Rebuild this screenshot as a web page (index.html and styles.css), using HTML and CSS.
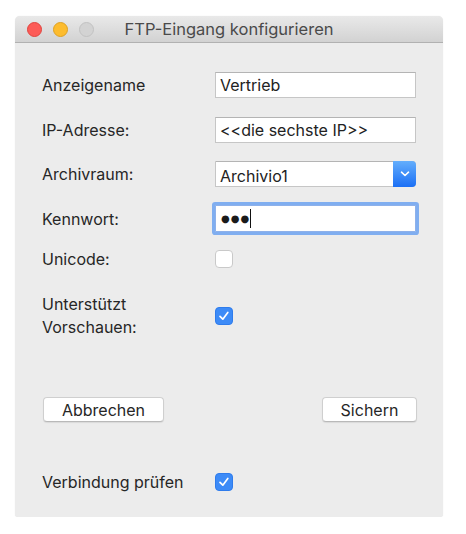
FILE: index.html
```html
<!DOCTYPE html>
<html lang="de">
<head>
<meta charset="utf-8">
<title>FTP-Eingang konfigurieren</title>
<link rel="stylesheet" href="styles.css">
</head>
<body>
<div class="window">
  <div class="titlebar">
    <div class="lights">
      <span class="light red"></span>
      <span class="light yellow"></span>
      <span class="light gray"></span>
    </div>
    <div class="title">FTP-Eingang konfigurieren</div>
  </div>
  <div class="content">
    <div class="row r1">
      <label class="label">Anzeigename</label>
      <div class="field">Vertrieb</div>
    </div>
    <div class="row r2">
      <label class="label">IP-Adresse:</label>
      <div class="field">&lt;&lt;die sechste IP&gt;&gt;</div>
    </div>
    <div class="row r3">
      <label class="label">Archivraum:</label>
      <div class="field select">
        <span class="select-text">Archivio1</span>
        <span class="select-btn">
          <svg width="10" height="6" viewBox="0 0 10 6"><path d="M1.5 1.2 L5 4.5 L8.5 1.2" fill="none" stroke="#fff" stroke-width="1.6" stroke-linecap="round" stroke-linejoin="round"/></svg>
        </span>
      </div>
    </div>
    <div class="row r4">
      <label class="label">Kennwort:</label>
      <div class="field focused"><span class="dots">●●●</span><span class="caret"></span></div>
    </div>
    <div class="row r5">
      <label class="label">Unicode:</label>
      <span class="check"></span>
    </div>
    <div class="row r6">
      <label class="label two">Unterstützt<br>Vorschauen:</label>
      <span class="check on">
        <svg width="18" height="18" viewBox="0 0 18 18"><path d="M5 9.3 L7.8 12.2 L12.8 5.5" fill="none" stroke="#fff" stroke-width="1.7" stroke-linecap="round" stroke-linejoin="round"/></svg>
      </span>
    </div>
    <div class="buttons">
      <button class="btn cancel">Abbrechen</button>
      <button class="btn save">Sichern</button>
    </div>
    <div class="row r7">
      <label class="label">Verbindung prüfen</label>
      <span class="check on">
        <svg width="18" height="18" viewBox="0 0 18 18"><path d="M5 9.3 L7.8 12.2 L12.8 5.5" fill="none" stroke="#fff" stroke-width="1.7" stroke-linecap="round" stroke-linejoin="round"/></svg>
      </span>
    </div>
  </div>
</div>
</body>
</html>
```
FILE: styles.css
```css
html, body {
  margin: 0;
  padding: 0;
  background: #ffffff;
}
body {
  font-family: Inter, "Liberation Sans", sans-serif;
  color: #262626;
}
.window {
  margin: 16px 0 0 15px;
  width: 428px;
  height: 501px;
  background: #ececec;
  border-radius: 5px 5px 3px 3px;
  box-shadow: 0 0 1px rgba(0,0,0,0.12);
  overflow: hidden;
}
.titlebar {
  height: 26px;
  border-bottom: 1px solid #b1b1b1;
  background: linear-gradient(#e9e9e9, #d2d2d2);
  display: flex;
  align-items: center;
  position: relative;
}
.lights {
  display: flex;
  gap: 11px;
  padding-left: 12px;
}
.light {
  width: 15px;
  height: 15px;
  border-radius: 50%;
  box-sizing: border-box;
}
.red { background: #fc5b57; border: 1px solid #e0443e; }
.yellow { background: #fdbc2e; border: 1px solid #dea123; }
.gray { background: #d3d3d3; border: 1px solid #c2c2c2; }
.title {
  position: absolute;
  left: 0;
  right: 0;
  top: 0;
  height: 26px;
  line-height: 27px;
  text-align: center;
  font-size: 16.5px;
  color: #4a4a4a;
  pointer-events: none;
}
.content {
  padding: 0 0 0 27px;
  display: flex;
  flex-direction: column;
}
.row {
  display: flex;
  align-items: center;
}
.label {
  width: 173px;
  flex: none;
  font-size: 16px;
  color: #262626;
}
.label.two {
  line-height: 23px;
}
.r1 { margin-top: 29px; height: 26px; }
.r2 { margin-top: 19px; height: 26px; }
.r3 { margin-top: 18px; height: 26px; }
.r4 { margin-top: 18px; height: 27px; }
.r5 { margin-top: 18px; height: 18px; }
.r6 { margin-top: 25px; height: 46px; }
.r7 { margin-top: 51px; height: 18px; }
.field {
  box-sizing: border-box;
  width: 201px;
  height: 100%;
  background: #fff;
  border: 1px solid #c6c6c6;
  border-top-color: #b4b4b4;
  padding: 0 4px;
  font-size: 16px;
  color: #222;
  display: flex;
  align-items: center;
}
.select {
  padding: 0 0 0 4px;
  border-radius: 0 4px 4px 0;
  position: relative;
}
.select-text { flex: 1; padding-top: 3px; }
.select-btn {
  width: 23px;
  height: calc(100% + 2px);
  margin: -1px -1px -1px 0;
  border-radius: 0 4px 4px 0;
  background: linear-gradient(#64aefc, #1b6ff5);
  display: flex;
  align-items: center;
  justify-content: center;
}
.focused {
  border: 1px solid #8eb1ea;
  box-shadow: 0 0 0 3px #80aef0;
  border-radius: 1px;
  padding-left: 5px;
}
.dots {
  font-family: "DejaVu Sans", sans-serif;
  font-size: 10px;
  letter-spacing: 1px;
  color: #1a1a1a;
}
.caret {
  width: 1px;
  height: 19px;
  background: #111;
  margin-left: 0;
}
.check {
  box-sizing: border-box;
  width: 18px;
  height: 18px;
  border-radius: 4px;
  background: #fff;
  border: 1px solid #c9c9c9;
  display: block;
}
.check.on {
  background: #3d8bf7;
  border-color: #2f7cec;
}
.check svg { display: block; margin: -1px; }
.buttons {
  margin-top: 58px;
  display: flex;
  justify-content: space-between;
  width: 374px;
  padding-left: 1px;
}
.btn {
  height: 25px;
  background: #fff;
  border: 1px solid #cfcfcf;
  border-bottom-color: #b9b9b9;
  border-radius: 4px;
  box-shadow: 0 1px 1px rgba(0,0,0,0.08);
  font-family: Inter, "Liberation Sans", sans-serif;
  font-size: 16px;
  color: #262626;
  padding: 0;
}
.cancel { width: 121px; }
.save { width: 95px; }
```
